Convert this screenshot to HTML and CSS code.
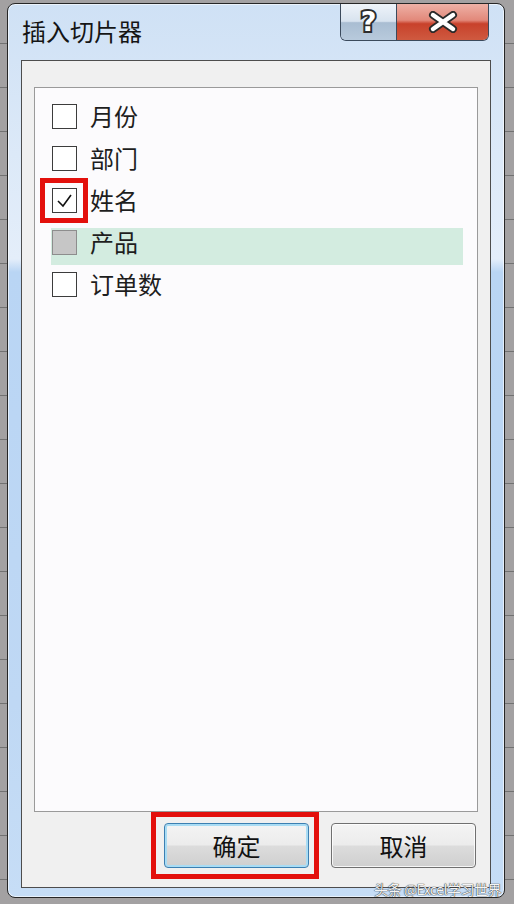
FILE: index.html
```html
<!DOCTYPE html>
<html lang="zh-CN">
<head>
    <meta charset="UTF-8">
    <meta name="viewport" content="width=device-width, initial-scale=1.0">
    <title>插入切片器</title>
    <link rel="stylesheet" href="styles.css">
</head>
<body>
    <!-- 对话框 -->
    <div class="window">
        <div class="titlebar">
            <div class="title">插入切片器</div>
            <div class="caption">
                <div class="cap-btn help">?</div>
                <div class="cap-btn close">
                    <svg width="32" height="22" viewBox="0 0 32 22">
                        <path d="M6 4 L26 18 M26 4 L6 18" stroke="#2a2a2a" stroke-width="8" stroke-linecap="round"/>
                        <path d="M6 4 L26 18 M26 4 L6 18" stroke="#fff" stroke-width="4.5" stroke-linecap="round"/>
                    </svg>
                </div>
            </div>
        </div>

        <div class="client">
            <div class="list">
                <div class="item"><span class="check"></span><span class="label">月份</span></div>
                <div class="item"><span class="check"></span><span class="label">部门</span></div>
                <div class="item">
                    <span class="check">
                        <svg width="23" height="23" viewBox="0 0 23 23">
                            <path d="M5 12 L10 17 L18 6" fill="none" stroke="#111" stroke-width="1.6"/>
                        </svg>
                        <span class="mark"></span>
                    </span>
                    <span class="label">姓名</span>
                </div>
                <div class="item selected"><span class="check partial"></span><span class="label">产品</span></div>
                <div class="item"><span class="check"></span><span class="label">订单数</span></div>
            </div>

            <div class="actions">
                <div class="btn-wrap">
                    <button class="btn default">确定</button>
                    <span class="mark"></span>
                </div>
                <button class="btn">取消</button>
            </div>
        </div>
    </div>

    <div class="watermark">头条 @Excel学习世界</div>
</body>
</html>
```

FILE: styles.css
```css
body{
    margin: 0;
    height: 904px;
    overflow: hidden;
    font-family: "Noto Sans CJK SC", "Noto Sans", sans-serif;
    background-color: #a3a1a2;
    /* 后面表格的横线 */
    background-image: repeating-linear-gradient(to bottom, transparent 0, transparent 43px, #727272 43px, #727272 44px);
}

/* 窗口外框 */
.window{
    box-sizing: border-box;
    width: 498px;
    height: 895px;
    margin: 3px 0 0 7px;
    padding: 0 13px 9px 13px;
    border: 1px solid #262626;
    border-radius: 8px;
    background: linear-gradient(to bottom, #cfe1f5 0, #dce9f8 150px, #e4eefa 255px, #b9d5f4 268px, #bfd8f4 700px, #c6ddf6 100%);
    box-shadow: inset 0 0 0 1px rgba(255, 255, 255, 0.6);
    display: flex;
    flex-direction: column;
}

.titlebar{
    height: 56px;
    display: flex;
    justify-content: space-between;
    align-items: flex-start;
}
.title{
    padding: 13px 0 0 1px;
    font-size: 24px;
    line-height: 28px;
    color: #151515;
}

/* 右上角按钮 */
.caption{
    display: flex;
    margin-right: 2px;
    border: 1px solid #3b4a5c;
    border-top: none;
    border-radius: 0 0 6px 6px;
    overflow: hidden;
}
.cap-btn{
    height: 36px;
    display: flex;
    align-items: center;
    justify-content: center;
}
.help{
    width: 55px;
    border-right: 1px solid #3b4a5c;
    background: linear-gradient(to bottom, #eef3f9 0, #d8e3ef 48%, #a9bdd2 52%, #b8cadc 100%);
    font-family: "DejaVu Sans", sans-serif;
    font-weight: bold;
    font-size: 27px;
    line-height: 30px;
    color: #fff;
    -webkit-text-stroke: 4px #2d2d2d;
    paint-order: stroke fill;
}
.close{
    width: 91px;
    background: linear-gradient(to bottom, #eeb1a6 0, #e2887a 45%, #c8412b 55%, #cf5a40 100%);
}

/* 客户区 */
.client{
    flex: 1;
    display: flex;
    flex-direction: column;
    padding: 26px 12px 0 12px;
    border: 1px solid #4d4d4d;
    background-color: #f0f0f0;
}
.list{
    height: 725px;
    box-sizing: border-box;
    padding: 14px 14px 0 16px;
    border: 1px solid #9a9a9a;
    background-color: #fcfbfd;
}
.item{
    height: 37px;
    margin-bottom: 5px;
    padding-left: 1px;
    display: flex;
    align-items: flex-start;
    gap: 13px;
}
.item.selected{
    background-color: #d3ece0;
}
.check{
    position: relative;
    box-sizing: border-box;
    width: 25px;
    height: 25px;
    margin-top: 2px;
    border: 1px solid #3c3c3c;
    background-color: #fff;
}
.check svg{
    display: block;
}
.check.partial{
    border-color: #8d8d8d;
    background-color: #c6c6c6;
}
.label{
    font-size: 24px;
    line-height: 28px;
    color: #1e1e1e;
}

/* 红框标记 */
.mark{
    position: absolute;
    box-sizing: border-box;
    border: 5px solid #e3100c;
}
.check .mark{
    left: -13px;
    top: -11px;
    width: 48px;
    height: 45px;
}

.actions{
    flex: 1;
    display: flex;
    justify-content: flex-end;
    align-items: flex-start;
    gap: 22px;
    padding: 11px 2px 0 0;
}
.btn-wrap{
    position: relative;
}
.btn-wrap .mark{
    left: -13px;
    top: -11px;
    width: 168px;
    height: 67px;
}
.btn{
    display: block;
    width: 145px;
    height: 45px;
    padding: 0;
    border: 1px solid #707070;
    border-radius: 4px;
    background: linear-gradient(to bottom, #f4f4f4 0, #ececec 48%, #dcdcdc 52%, #cfcfcf 100%);
    box-shadow: inset 0 0 0 1px rgba(255, 255, 255, 0.8);
    font-family: "Noto Sans CJK SC", sans-serif;
    font-size: 24px;
    color: #111;
}
.btn.default{
    border-color: #3c7fb1;
    box-shadow: inset 0 0 0 2px #a9dcf4;
}

.watermark{
    position: absolute;
    left: 374px;
    top: 879px;
    font-size: 14px;
    letter-spacing: -0.5px;
    color: #f4f4f4;
    text-shadow: 0 0 1px #222, 0 0 1px #222;
}
```
